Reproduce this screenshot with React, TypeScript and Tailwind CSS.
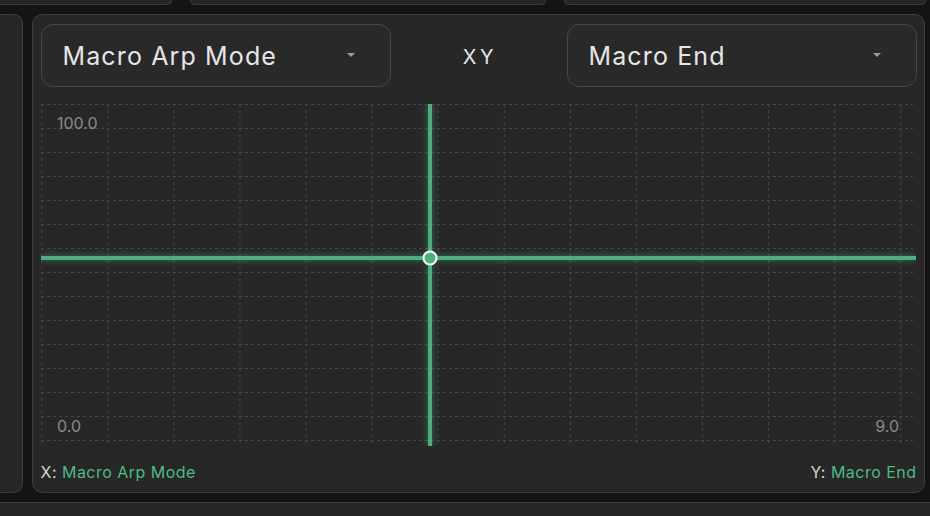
import React from 'react'

const GREEN = '#4caf7d'

function Caret() {
  return (
    <svg width="10" height="6" viewBox="0 0 10 6" className="shrink-0">
      <path d="M1 1 L9 1 L5 5 Z" fill="#9a9a9a" />
    </svg>
  )
}

function Select({ label }: { label: string }) {
  return (
    <div className="h-full flex items-center justify-between pl-[21px] pr-[34px] border-[1.5px] border-[#464646] rounded-[12px] bg-[#292929]">
      <span className="text-[25px] text-[#e6e6e6] tracking-[0.045em] pt-[3px]">{label}</span>
      <Caret />
    </div>
  )
}

function XYPlot() {
  const hLines = Array.from({ length: 15 }, (_, k) => 0.5 + 24 * k)
  const vLines = Array.from({ length: 14 }, (_, n) => 0.7 + 66.08 * n)
  const px = 389
  const py = 154
  return (
    <svg width="875" height="342" viewBox="0 0 875 342" className="block">
      <defs>
        <filter id="glow" x="-20%" y="-50%" width="140%" height="200%">
          <feGaussianBlur stdDeviation="3" />
        </filter>
      </defs>
      {hLines.map((y) => (
        <line key={'h' + y} x1={0} x2={872} y1={y} y2={y} stroke="#474747" strokeWidth={1} strokeDasharray="3 3" />
      ))}
      {vLines.map((x) => (
        <line key={'v' + x} x1={x} x2={x} y1={0} y2={340} stroke="#474747" strokeWidth={1} strokeDasharray="3 3" />
      ))}
      <text x={16} y={24.5} fill="#8a8a8a" fontSize={16} fontFamily="Inter, sans-serif">100.0</text>
      <text x={16} y={328} fill="#8a8a8a" fontSize={16} fontFamily="Inter, sans-serif">0.0</text>
      <text x={858} y={328} fill="#8a8a8a" fontSize={16} fontFamily="Inter, sans-serif" textAnchor="end">9.0</text>

      <g filter="url(#glow)" opacity={0.45}>
        <line x1={0} x2={875} y1={py} y2={py} stroke={GREEN} strokeWidth={6} />
        <line x1={px} x2={px} y1={0} y2={342} stroke={GREEN} strokeWidth={6} />
      </g>
      <line x1={0} x2={875} y1={py} y2={py} stroke={GREEN} strokeWidth={4} />
      <line x1={px} x2={px} y1={0} y2={342} stroke={GREEN} strokeWidth={4} />
      <circle cx={px} cy={py} r={6.5} fill={GREEN} stroke="#ffffff" strokeWidth={2} />
    </svg>
  )
}

export default function App() {
  return (
    <div
      className="w-[930px] h-[516px] overflow-hidden bg-[#141414] flex flex-col gap-[9px]"
      style={{ fontFamily: 'Inter, "Noto Sans", sans-serif' }}
    >
      {/* strip of panels above, cut off */}
      <div className="h-[5px] flex gap-[18px] shrink-0">
        <div className="w-[174px] -ml-[2px] bg-[#272727] border-b-[1.5px] border-r-[1.5px] border-[#3d3d3d] rounded-br-[8px]" />
        <div className="w-[356px] bg-[#272727] border-b-[1.5px] border-x-[1.5px] border-[#3d3d3d] rounded-b-[8px]" />
        <div className="w-[362px] bg-[#272727] border-b-[1.5px] border-x-[1.5px] border-[#3d3d3d] rounded-b-[8px]" />
      </div>

      <div className="flex-1 flex gap-[9px] min-h-0">
        <div className="w-[23px] bg-[#272727] border-y-[1.5px] border-r-[1.5px] border-[#3d3d3d] rounded-r-[9px]" />

        <div className="w-[893px] bg-[#272727] border-[1.5px] border-[#3d3d3d] rounded-[10px] px-[7.5px] pt-[8.5px] flex flex-col">
          <div className="h-[63px] grid grid-cols-[350px_1fr_350px]">
            <Select label="Macro Arp Mode" />
            <div className="flex items-center justify-center text-[20px] text-[#e6e6e6] tracking-[0.18em] pl-[3px] pt-[3px]">XY</div>
            <Select label="Macro End" />
          </div>

          <div className="mt-[17px]">
            <XYPlot />
          </div>

          <div className="mt-[16px] flex justify-between text-[16px] leading-[20px] tracking-[0.03em]">
            <span className="text-[#d6d6d6]">
              X: <span className="text-[#4dbb86]">Macro Arp Mode</span>
            </span>
            <span className="text-[#d6d6d6]">
              Y: <span className="text-[#4dbb86]">Macro End</span>
            </span>
          </div>
        </div>
      </div>

      <div className="h-[14px] shrink-0 bg-[#272727] border-t-[1.5px] border-[#3d3d3d]" />
    </div>
  )
}
